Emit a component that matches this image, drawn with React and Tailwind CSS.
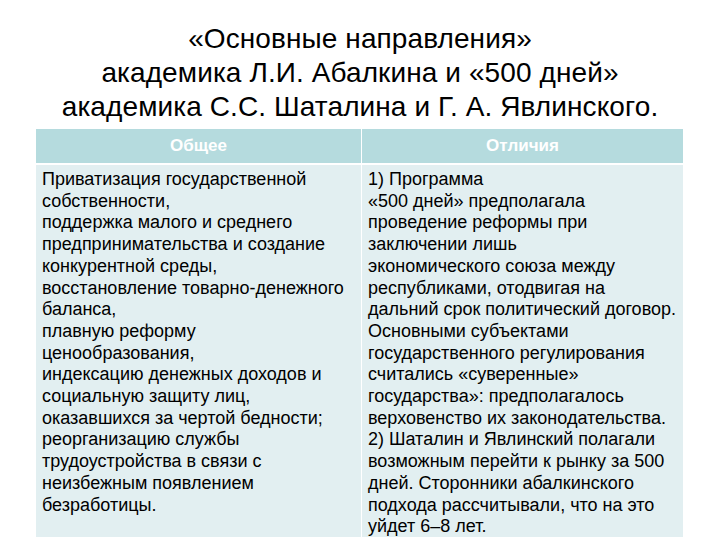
import React from "react";

const left = [
  "Приватизация государственной",
  "собственности,",
  "поддержка малого и среднего",
  "предпринимательства и создание",
  "конкурентной среды,",
  "восстановление товарно-денежного",
  "баланса,",
  "плавную реформу",
  "ценообразования,",
  "индексацию денежных доходов и",
  "социальную защиту лиц,",
  "оказавшихся за чертой бедности;",
  "реорганизацию службы",
  "трудоустройства в связи с",
  "неизбежным появлением",
  "безработицы.",
];

const right = [
  "1) Программа",
  "«500 дней» предполагала",
  "проведение реформы при",
  "заключении лишь",
  "экономического союза между",
  "республиками, отодвигая на",
  "дальний срок политический договор.",
  "Основными субъектами",
  "государственного регулирования",
  "считались «суверенные»",
  "государства»: предполагалось",
  "верховенство их законодательства.",
  "2) Шаталин и Явлинский полагали",
  "возможным перейти к рынку за 500",
  "дней. Сторонники абалкинского",
  "подхода рассчитывали, что на это",
  "уйдет 6–8 лет.",
];

export default function App() {
  return (
    <div className="w-[720px] h-[540px] bg-white overflow-hidden font-['Liberation_Sans',Arial,sans-serif] text-black">
      <h1 className="pt-[22px] text-center text-[28px] leading-[34px] tracking-[0.1px]">
        «Основные направления»
        <br />
        академика Л.И. Абалкина и «500 дней»
        <br />
        академика С.С. Шаталина и Г. А. Явлинского.
      </h1>

      <div className="mt-[5px] mx-[36px] w-[646px]">
        <div className="grid grid-cols-[325px_321px] gap-x-[1px] bg-white">
          <div className="h-[34px] bg-[#b5dbde] flex items-center justify-center text-white font-bold text-[17px]">
            Общее
          </div>
          <div className="h-[34px] bg-[#b5dbde] flex items-center justify-center text-white font-bold text-[17px]">
            Отличия
          </div>
        </div>
        <div className="grid grid-cols-[325px_321px] gap-x-[1px] mt-[2px] bg-white">
          <div className="h-[372px] bg-[#e2eff1] pl-[6px] pt-[4px] text-[18px] leading-[21.7px]">
            {left.map((t, i) => (
              <div key={i} className="whitespace-nowrap">{t}</div>
            ))}
          </div>
          <div className="h-[372px] bg-[#e2eff1] pl-[6px] pt-[4px] text-[18px] leading-[21.7px]">
            {right.map((t, i) => (
              <div key={i} className="whitespace-nowrap">{t}</div>
            ))}
          </div>
        </div>
      </div>
    </div>
  );
}
